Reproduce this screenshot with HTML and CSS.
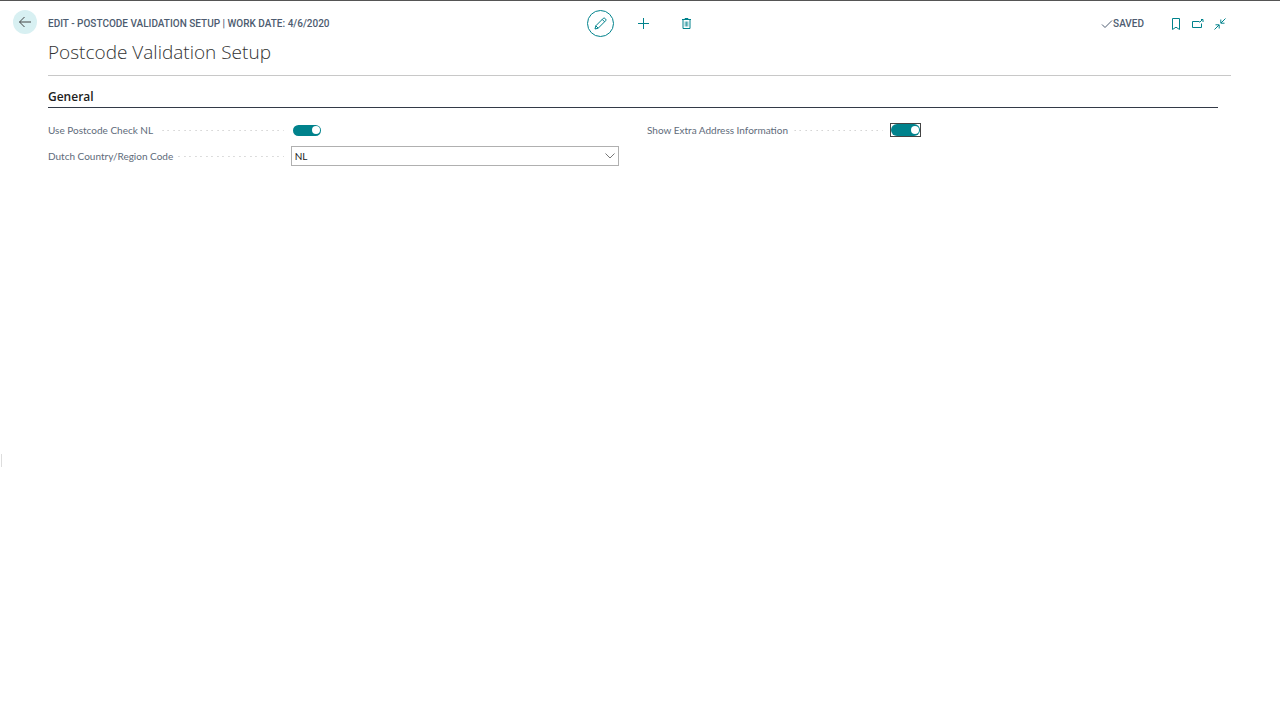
FILE: index.html
```html
<!DOCTYPE html>
<html lang="en">
<head>
    <meta charset="UTF-8">
    <meta name="viewport" content="width=device-width, initial-scale=1.0">
    <title>Postcode Validation Setup</title>
    <link rel="stylesheet" href="styles.css">
</head>
<body>
    <div class="page">
        <header class="page-header">
            <button type="button" class="back-btn" aria-label="Back">
                <svg width="14" height="14" viewBox="0 0 14 14"><path d="M13 7H1.5M6.5 2L1.5 7l5 5"/></svg>
            </button>

            <div class="header-content">
                <div class="toolbar">
                    <p class="caption">EDIT - POSTCODE VALIDATION SETUP | WORK DATE: 4/6/2020</p>

                    <div class="actions">
                        <button type="button" class="icon-btn edit-btn" aria-label="Edit">
                            <svg width="13" height="13" viewBox="0 0 13 13"><path d="M1 12l.8-3.2L9.3 1.300q.8-.7 1.800.2l.4.4q.9 1 .2 1.800L4.200 11.200zM8.200 2.400l2.400 2.400M1.800 8.800l2.400 2.400"/></svg>
                        </button>
                        <button type="button" class="icon-btn" aria-label="New">
                            <svg width="11" height="11" viewBox="0 0 11 11"><path d="M5.500 0v11M0 5.500h11"/></svg>
                        </button>
                        <button type="button" class="icon-btn" aria-label="Delete">
                            <svg width="9" height="11" viewBox="0 0 9 11"><path d="M0 1.500h9M3 1V.5h3V1M1 2v8.500h7V2"/><path stroke-width=".7" d="M3.200 3.500v5M4.500 3.500v5M5.800 3.500v5"/></svg>
                        </button>
                    </div>

                    <div class="status-area">
                        <span class="saved">
                            <svg width="12" height="10" viewBox="0 0 12 10"><path d="M1 5.500l3 3L11 1.500"/></svg>
                            SAVED
                        </span>
                        <div class="window-actions">
                            <button type="button" class="icon-btn" aria-label="Bookmark">
                                <svg width="12" height="12" viewBox="0 0 12 12"><path d="M2.500.5h7v11L6 9.200l-3.500 2.300z"/></svg>
                            </button>
                            <button type="button" class="icon-btn" aria-label="Open in new window">
                                <svg width="12" height="12" viewBox="0 0 12 12"><path d="M7.500 3.500h-7v6h9V5.500M7.500 4.500L11 1M9 1.500h2V4"/></svg>
                            </button>
                            <button type="button" class="icon-btn" aria-label="Collapse">
                                <svg width="12" height="12" viewBox="0 0 12 12"><path d="M11.500.5L7 5M6.800 1.500V5.200h3.700M.5 11.500L5 7M1.500 6.800h3.700v3.700"/></svg>
                            </button>
                        </div>
                    </div>
                </div>
                <h1>Postcode Validation Setup</h1>
            </div>
        </header>

        <main class="section">
            <h2>General</h2>
            <form class="fields">
                <div class="field">
                    <div class="field-label">
                        <label for="use-check">Use Postcode Check NL</label>
                    </div>
                    <div class="toggle-wrap">
                        <input type="checkbox" class="toggle" id="use-check" checked>
                    </div>
                </div>
                <div class="field">
                    <div class="field-label">
                        <label for="show-extra">Show Extra Address Information</label>
                    </div>
                    <div class="toggle-wrap focused">
                        <input type="checkbox" class="toggle" id="show-extra" checked>
                    </div>
                </div>
                <div class="field">
                    <div class="field-label">
                        <label for="country">Dutch Country/Region Code</label>
                    </div>
                    <div class="select-wrap">
                        <select id="country">
                            <option>NL</option>
                        </select>
                        <svg class="chevron" width="10" height="6" viewBox="0 0 10 6"><path d="M.5.5L5 5 9.500.5"/></svg>
                    </div>
                </div>
            </form>
        </main>
        <div class="side-handle"></div>
    </div>
</body>
</html>
```

FILE: styles.css
```css
:root {
    --primary-color: #00828c;
    --back-color: #d8f0f2;
    --text-color: #212121;
    --label-color: #606b7a;
    --caption-color: #4d5c70;
    --border-color: #c8c8c8;
}

* {
    box-sizing: border-box;
    margin: 0;
    padding: 0;
}

body {
    font-family: Lato, "Noto Sans", sans-serif;
    font-size: 10px;
    color: var(--text-color);
    background: white;
}

button {
    border: none;
    background: none;
    cursor: pointer;
}

svg {
    display: block;
    fill: none;
    stroke: currentColor;
}

.page {
    position: relative;
    min-height: 100vh;
    border-top: 1px solid #555;
}

.page-header {
    display: flex;
    gap: 11px;
    padding: 9px 49px 0 13px;
}

.back-btn {
    display: flex;
    align-items: center;
    justify-content: center;
    width: 24px;
    height: 24px;
    border-radius: 50%;
    background: var(--back-color);
    color: #444;
}

.header-content {
    flex: 1;
    padding-bottom: 7px;
    border-bottom: 1px solid var(--border-color);
}

.toolbar {
    display: grid;
    grid-template-columns: 1fr auto 1fr;
    align-items: center;
    height: 27px;
}

.caption,
.saved {
    font-family: Roboto, sans-serif;
    font-size: 10px;
    font-weight: 500;
    color: var(--caption-color);
}

.actions {
    display: flex;
    gap: 16px;
    margin-left: 8px;
}

.icon-btn {
    display: flex;
    align-items: center;
    justify-content: center;
    width: 27px;
    height: 27px;
    color: var(--primary-color);
}

.edit-btn {
    border: 1px solid var(--primary-color);
    border-radius: 50%;
}

.status-area {
    display: flex;
    justify-content: flex-end;
    align-items: center;
    gap: 26px;
    padding-right: 5px;
}

.saved {
    display: flex;
    align-items: center;
}

.window-actions {
    display: flex;
    gap: 10px;
}

.window-actions .icon-btn {
    width: 12px;
}

h1 {
    font-family: "Open Sans", "Noto Sans", sans-serif;
    font-size: 19px;
    font-weight: 300;
    line-height: 31px;
    color: #333;
}

.section {
    padding: 12px 62px 0 48px;
}

h2 {
    font-family: "Open Sans", "Noto Sans", sans-serif;
    font-size: 12px;
    font-weight: 600;
    line-height: 18px;
    padding-bottom: 1px;
    border-bottom: 1px solid #333a47;
}

.fields {
    display: grid;
    grid-template-columns: 1fr 1fr;
    gap: 6px 28px;
    padding-top: 12px;
}

.field {
    display: grid;
    grid-template-columns: 17fr 23fr;
    align-items: center;
    min-height: 20px;
}

.field-label {
    display: flex;
    align-items: center;
    gap: 5px;
    padding-right: 7px;
    color: var(--label-color);
}

/* dotted leader between label and control */
.field-label::after {
    content: "";
    flex: 1;
    height: 1px;
    background:
        linear-gradient(90deg, #bbb 1px, transparent 1px 5px, #bbb 5px 6px, transparent 6px)
        right / 11px 1px repeat-x;
}

.toggle-wrap {
    justify-self: start;
    padding: 1px;
    border: 1px solid transparent;
}

.toggle-wrap.focused {
    padding: 0;
    border-color: #444;
}

.toggle {
    appearance: none;
    display: flex;
    align-items: center;
    justify-content: flex-end;
    width: 28px;
    height: 11px;
    padding-right: 1px;
    border-radius: 6px;
    background: var(--primary-color);
}

.focused .toggle {
    width: 29px;
    height: 12px;
}

.toggle::before {
    content: "";
    width: 8px;
    height: 8px;
    border-radius: 50%;
    background: white;
}

.toggle:not(:checked) {
    justify-content: flex-start;
    background: #999;
}

.select-wrap {
    position: relative;
}

select {
    appearance: none;
    display: block;
    width: 100%;
    height: 20px;
    padding: 0 24px 0 3px;
    border: 1px solid #b0b0b0;
    border-radius: 0;
    background: white;
    font: inherit;
    color: var(--text-color);
}

.chevron {
    position: absolute;
    right: 4px;
    top: 7px;
    color: #777;
    pointer-events: none;
}

.side-handle {
    position: absolute;
    left: 1px;
    top: 63%;
    width: 1px;
    height: 13px;
    background: #ddd;
}
```
